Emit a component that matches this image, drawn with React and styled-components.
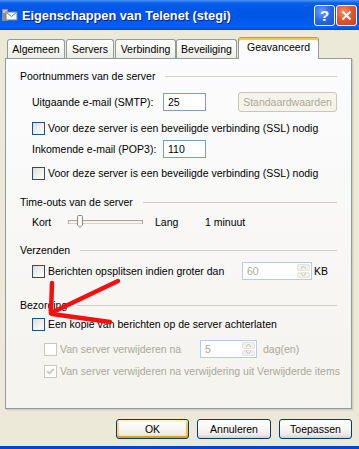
import React from "react";
import styled, { createGlobalStyle } from "styled-components";

const Global = createGlobalStyle`
  html, body { margin: 0; padding: 0; background: #ECE9D8; }
  * { box-sizing: border-box; }
`;

const Window = styled.div`
  position: relative;
  width: 359px;
  height: 449px;
  display: flex;
  flex-direction: column;
  background: #ECE9D8;
  border-bottom: 3px solid #0842D2;
  font-family: "Liberation Sans", Arial, sans-serif;
  font-size: 10.5px;
  color: #000;
  overflow: hidden;
`;

const TitleBar = styled.div`
  height: 30px;
  flex: none;
  display: flex;
  align-items: center;
  padding: 0 2px 0 2px;
  background: linear-gradient(
    to bottom,
    #4A93F5 0px,
    #0A5FEA 3px,
    #0058E8 8px,
    #0055E3 16px,
    #005DF2 24px,
    #0062F8 27px,
    #0048D8 30px
  );
`;

const TitleText = styled.span`
  margin-left: 4px;
  font-family: "Liberation Sans", Arial, sans-serif;
  font-weight: bold;
  font-size: 12.75px;
  color: #fff;
  text-shadow: 1px 1px 0 #0A1E8C;
  white-space: nowrap;
`;

const Spacer = styled.div`
  flex: 1;
`;

const CaptionButton = styled.div`
  width: 21px;
  height: 21px;
  margin-left: ${(p) => p.$ml || 0}px;
  border: 1px solid #fff;
  border-radius: 3px;
  display: flex;
  align-items: center;
  justify-content: center;
  background: ${(p) =>
    p.$close
      ? "radial-gradient(circle at 35% 30%, #F0906A 0%, #E0582F 45%, #C8401C 100%)"
      : "radial-gradient(circle at 35% 30%, #6AA0FF 0%, #2A66E8 50%, #1A4FD0 100%)"};
  color: #fff;
  font-weight: bold;
  font-size: 15px;
  font-family: "Liberation Sans", Arial, sans-serif;
`;

const Body = styled.div`
  flex: 1;
  display: flex;
  flex-direction: column;
  padding: 7px 7px 7px 5px;
`;

const TabStrip = styled.div`
  height: 21px;
  display: flex;
  align-items: flex-end;
  padding-left: 2px;
  position: relative;
  z-index: 1;
`;

const Tab = styled.div`
  width: ${(p) => p.$w}px;
  margin-left: ${(p) => p.$ml || 0}px;
  height: ${(p) => (p.$active ? 22 : 19)}px;
  margin-bottom: ${(p) => (p.$active ? -1 : 0)}px;
  border: 1px solid #919B9C;
  border-bottom: none;
  border-top-color: ${(p) => (p.$active ? "#E68B2C" : "#919B9C")};
  border-radius: 3px 3px 0 0;
  display: flex;
  justify-content: center;
  align-items: ${(p) => (p.$active ? "flex-start" : "center")};
  padding-top: ${(p) => (p.$active ? 3 : 0)}px;
  line-height: 12px;
  white-space: nowrap;
  background: ${(p) =>
    p.$active
      ? "#FCFCFE"
      : "linear-gradient(to bottom, #FFFFFF, #F6F5F1 60%, #ECEBE5)"};
  box-shadow: ${(p) => (p.$active ? "inset 0 2px 0 #FFC83C" : "none")};
`;

const Panel = styled.div`
  height: 351px;
  flex: none;
  border: 1px solid #919B9C;
  background: linear-gradient(to bottom, #FCFCFE, #F4F3EE);
  box-shadow: 1px 1px 0 #D0CDBE, 2px 2px 0 #E2DFD0;
  padding: 10px 14px 0 14px;
  display: flex;
  flex-direction: column;
`;

const GroupHeader = styled.div`
  height: 14px;
  margin-top: ${(p) => p.$mt || 0}px;
  display: flex;
  align-items: center;
  white-space: nowrap;
`;

const GroupLine = styled.div`
  flex: 1;
  height: 1px;
  margin-left: 10px;
  background: #D0D0BF;
`;

const Row = styled.div`
  height: ${(p) => p.$h}px;
  margin-top: ${(p) => p.$mt || 0}px;
  padding-left: ${(p) => p.$indent || 12}px;
  display: flex;
  align-items: center;
  white-space: nowrap;
  color: ${(p) => (p.$disabled ? "#ACA899" : "#000")};
`;

const FieldLabel = styled.span`
  width: ${(p) => p.$w}px;
  flex: none;
`;

const TextBox = styled.div`
  width: 43px;
  height: 18px;
  border: 1px solid #7F9DB9;
  background: #fff;
  padding-left: 4px;
  display: flex;
  align-items: center;
`;

const PushButton = styled.div`
  width: ${(p) => p.$w}px;
  height: ${(p) => p.$h || 20}px;
  margin-left: ${(p) => (p.$auto ? "auto" : "0")};
  border: 1px solid ${(p) => (p.$disabled ? "#C9C7BA" : "#003C74")};
  border-radius: 3px;
  display: flex;
  align-items: center;
  justify-content: center;
  color: ${(p) => (p.$disabled ? "#ACA899" : "#000")};
  background: ${(p) =>
    p.$disabled
      ? "#F5F4EA"
      : "linear-gradient(to bottom, #FFFFFF 0%, #F7F6F2 50%, #ECEBE6 80%, #D6D0C5 100%)"};
  box-shadow: ${(p) =>
    p.$default
      ? "inset 0 2px 0 #FFF0CF, inset 0 -2px 0 #E5A01A, inset 2px 0 0 #FBD48A, inset -2px 0 0 #F5BE52"
      : "none"};
`;

const Box = styled.span`
  width: 13px;
  height: 13px;
  flex: none;
  margin-right: 3px;
  border: 1px solid ${(p) => (p.$disabled ? "#CAC8BB" : "#1C5180")};
  background: ${(p) =>
    p.$disabled ? "#FFFFFF" : "linear-gradient(135deg, #DCDCD7 0%, #F0F0EC 50%, #FFFFFF 100%)"};
  display: flex;
  align-items: center;
  justify-content: center;
`;

const Spinner = styled.div`
  width: ${(p) => p.$w}px;
  height: 18px;
  flex: none;
  border: 1px solid #B7CBE2;
  background: #fff;
  color: #ACA899;
  padding-left: 4px;
  display: flex;
  align-items: center;
`;

const SpinButtons = styled.div`
  margin-left: auto;
  width: 15px;
  height: 100%;
  padding: 1px;
  display: flex;
  flex-direction: column;
  gap: 1px;
`;

const SpinHalf = styled.div`
  flex: 1;
  border-radius: 2px;
  background: #F1F0EA;
  border: 1px solid #E4E3DC;
  display: flex;
  align-items: center;
  justify-content: center;
`;

const Suffix = styled.span`
  margin-left: ${(p) => p.$ml || 3}px;
  color: ${(p) => (p.$disabled ? "#ACA899" : "#000")};
`;

const ButtonRow = styled.div`
  margin-top: 10px;
  height: 20px;
  display: flex;
  justify-content: flex-end;
  gap: 8px;
`;

const Overlay = styled.svg`
  position: absolute;
  left: 0;
  top: 0;
  pointer-events: none;
`;

const Check = ({ checked, disabled }) => (
  <Box $disabled={disabled}>
    {checked && (
      <svg width="9" height="9" viewBox="0 0 9 9">
        <path
          d="M1 4.2 L3.3 6.5 L8 1.8"
          fill="none"
          stroke={disabled ? "#CAC8BB" : "#21A121"}
          strokeWidth="1.8"
        />
      </svg>
    )}
  </Box>
);

const Spin = ({ w, value }) => (
  <Spinner $w={w}>
    {value}
    <SpinButtons>
      <SpinHalf>
        <svg width="5" height="3" viewBox="0 0 5 3">
          <path d="M0 3 L2.5 0 L5 3" fill="none" stroke="#C3C3BC" strokeWidth="1" />
        </svg>
      </SpinHalf>
      <SpinHalf>
        <svg width="5" height="3" viewBox="0 0 5 3">
          <path d="M0 0 L2.5 3 L5 0" fill="none" stroke="#C3C3BC" strokeWidth="1" />
        </svg>
      </SpinHalf>
    </SpinButtons>
  </Spinner>
);

const TitleIcon = () => (
  <svg width="16" height="16" viewBox="0 0 16 16">
    <rect x="0" y="2" width="6" height="12" fill="#8E8E8E" />
    <rect x="1" y="3" width="4" height="3" fill="#C8C8C8" />
    <rect x="4" y="5" width="11" height="8" fill="#F4F6FA" stroke="#6C7FA8" strokeWidth="1" />
    <path d="M4.5 5.5 L9.5 9.5 L14.5 5.5" fill="none" stroke="#6C7FA8" strokeWidth="1" />
  </svg>
);

const Slider = () => (
  <svg width="75" height="14" viewBox="0 0 75 14">
    <rect x="0.5" y="5.5" width="74" height="3" fill="#F0EFE8" stroke="#A9A89F" />
    <path d="M1 8 L74 8" stroke="#fff" strokeWidth="1" />
    <path
      d="M9.5 1.5 Q9.5 0.5 10.5 0.5 L13.5 0.5 Q14.5 0.5 14.5 1.5 L14.5 10 L12 12.5 L9.5 10 Z"
      fill="#F7F7F3"
      stroke="#8C8B83"
    />
  </svg>
);

export default function App() {
  return (
    <>
      <Global />
      <Window>
        <TitleBar>
          <TitleIcon />
          <TitleText>Eigenschappen van Telenet (stegi)</TitleText>
          <Spacer />
          <CaptionButton>?</CaptionButton>
          <CaptionButton $close $ml={1}>
            <svg width="11" height="11" viewBox="0 0 11 11">
              <path d="M1.5 1.5 L9.5 9.5 M9.5 1.5 L1.5 9.5" stroke="#fff" strokeWidth="2" />
            </svg>
          </CaptionButton>
        </TitleBar>
        <Body>
          <TabStrip>
            <Tab $w={58}>Algemeen</Tab>
            <Tab $w={48} $ml={1}>Servers</Tab>
            <Tab $w={61} $ml={1}>Verbinding</Tab>
            <Tab $w={61} $ml={0}>Beveiliging</Tab>
            <Tab $w={81} $ml={1} $active>Geavanceerd</Tab>
          </TabStrip>
          <Panel>
            <GroupHeader>
              Poortnummers van de server
              <GroupLine />
            </GroupHeader>
            <Row $h={20} $mt={9}>
              <FieldLabel $w={131}>Uitgaande e-mail (SMTP):</FieldLabel>
              <TextBox>25</TextBox>
              <PushButton $w={99} $h={20} $auto $disabled>
                Standaardwaarden
              </PushButton>
            </Row>
            <Row $h={16} $mt={8}>
              <Check />
              Voor deze server is een beveiligde verbinding (SSL) nodig
            </Row>
            <Row $h={18} $mt={4}>
              <FieldLabel $w={131}>Inkomende e-mail (POP3):</FieldLabel>
              <TextBox>110</TextBox>
            </Row>
            <Row $h={16} $mt={7}>
              <Check />
              Voor deze server is een beveiligde verbinding (SSL) nodig
            </Row>

            <GroupHeader $mt={14}>
              Time-outs van de server
              <GroupLine />
            </GroupHeader>
            <Row $h={16} $mt={5}>
              <FieldLabel $w={36}>Kort</FieldLabel>
              <Slider />
              <FieldLabel $w={50} style={{ marginLeft: 12 }}>
                Lang
              </FieldLabel>
              1 minuut
            </Row>

            <GroupHeader $mt={13}>
              Verzenden
              <GroupLine />
            </GroupHeader>
            <Row $h={18} $mt={5}>
              <Check />
              <FieldLabel $w={194}>Berichten opsplitsen indien groter dan</FieldLabel>
              <Spin w={70} value="60" />
              <Suffix $ml={2}>KB</Suffix>
            </Row>

            <GroupHeader $mt={18}>
              Bezorging
              <GroupLine />
            </GroupHeader>
            <Row $h={16} $mt={4}>
              <Check />
              Een kopie van berichten op de server achterlaten
            </Row>
            <Row $h={18} $mt={8} $indent={24} $disabled>
              <Check disabled />
              <FieldLabel $w={140}>Van server verwijderen na</FieldLabel>
              <Spin w={57} value="5" />
              <Suffix $ml={6} $disabled>
                dag(en)
              </Suffix>
            </Row>
            <Row $h={16} $mt={5} $indent={24} $disabled>
              <Check disabled checked />
              Van server verwijderen na verwijdering uit Verwijderde items
            </Row>
          </Panel>
          <ButtonRow>
            <PushButton $w={73} $default>
              OK
            </PushButton>
            <PushButton $w={74}>Annuleren</PushButton>
            <PushButton $w={73}>Toepassen</PushButton>
          </ButtonRow>
        </Body>
        <Overlay width="359" height="449" viewBox="0 0 359 449">
          <g stroke="#F21010" strokeWidth="4.5" strokeLinecap="round" fill="none">
            <path d="M118 281 L51 313" />
            <path d="M52 283 L51 313" />
            <path d="M52 314 L110 322" />
          </g>
        </Overlay>
      </Window>
    </>
  );
}
